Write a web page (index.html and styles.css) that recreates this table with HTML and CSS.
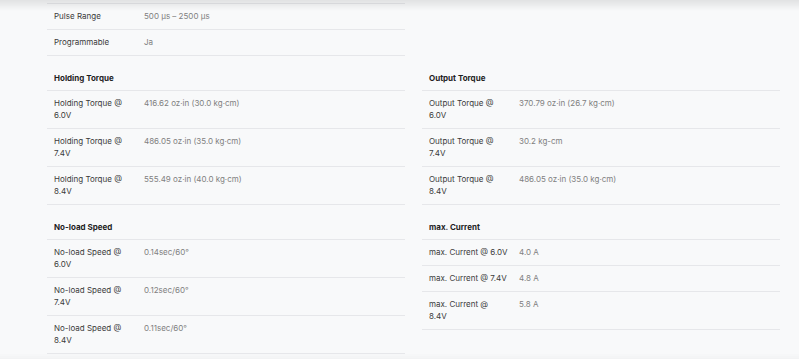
FILE: index.html
```html
<!DOCTYPE html>
<html lang="de">
<head>
    <meta charset="UTF-8">
    <title>Servo Spezifikationen</title>
    <link rel="stylesheet" href="styles.css">
</head>
<body>
    <div class="specs">
        <div class="spec-group first">
            <div class="spec-row"><span class="spec-label">Pulse Range</span><span class="spec-value">500 µs – 2500 µs</span></div>
            <div class="spec-row"><span class="spec-label">Programmable</span><span class="spec-value">Ja</span></div>
        </div>
        <div class="spec-group"></div>

        <div class="spec-group">
            <div class="spec-title">Holding Torque</div>
            <div class="spec-row"><span class="spec-label">Holding Torque @ 6.0V</span><span class="spec-value">416.62 oz·in (30.0 kg·cm)</span></div>
            <div class="spec-row"><span class="spec-label">Holding Torque @ 7.4V</span><span class="spec-value">486.05 oz·in (35.0 kg·cm)</span></div>
            <div class="spec-row"><span class="spec-label">Holding Torque @ 8.4V</span><span class="spec-value">555.49 oz·in (40.0 kg·cm)</span></div>
        </div>
        <div class="spec-group">
            <div class="spec-title">Output Torque</div>
            <div class="spec-row"><span class="spec-label">Output Torque @ 6.0V</span><span class="spec-value">370.79 oz·in (26.7 kg·cm)</span></div>
            <div class="spec-row"><span class="spec-label">Output Torque @ 7.4V</span><span class="spec-value">30.2 kg-cm</span></div>
            <div class="spec-row"><span class="spec-label">Output Torque @ 8.4V</span><span class="spec-value">486.05 oz·in (35.0 kg·cm)</span></div>
        </div>

        <div class="spec-group">
            <div class="spec-title">No-load Speed</div>
            <div class="spec-row"><span class="spec-label">No-load Speed @ 6.0V</span><span class="spec-value">0.14sec/60°</span></div>
            <div class="spec-row"><span class="spec-label">No-load Speed @ 7.4V</span><span class="spec-value">0.12sec/60°</span></div>
            <div class="spec-row"><span class="spec-label">No-load Speed @ 8.4V</span><span class="spec-value">0.11sec/60°</span></div>
        </div>
        <div class="spec-group">
            <div class="spec-title">max. Current</div>
            <div class="spec-row"><span class="spec-label">max. Current @ 6.0V</span><span class="spec-value">4.0 A</span></div>
            <div class="spec-row"><span class="spec-label">max. Current @ 7.4V</span><span class="spec-value">4.8 A</span></div>
            <div class="spec-row"><span class="spec-label">max. Current @<br>8.4V</span><span class="spec-value">5.8 A</span></div>
        </div>
    </div>
</body>
</html>
```

FILE: styles.css
```css
body {
    margin: 0;
    padding: 3px 19px 0 47px;
    background-color: #f8f9fa;
    font-family: Inter, "Noto Sans", sans-serif;
    font-size: 8px;
    line-height: 12px;
    color: #3b3b3b;
    overflow: hidden;
}
body::before {
    content: "";
    position: fixed;
    top: 0;
    left: 0;
    right: 0;
    height: 11px;
    background: linear-gradient(to bottom, rgba(0,0,0,0.09), rgba(0,0,0,0));
    pointer-events: none;
}
body::after {
    content: "";
    position: fixed;
    bottom: 0;
    left: 0;
    right: 0;
    height: 6px;
    background: linear-gradient(to top, rgba(0,0,0,0.025), rgba(0,0,0,0));
    pointer-events: none;
}
.specs {
    display: grid;
    grid-template-columns: 358px 358px;
    column-gap: 17px;
    align-items: start;
}
.spec-group.first {
    border-top: 1px solid #e6e7ea;
}
.spec-title {
    padding: 16px 7px 6px;
    font-weight: 700;
    color: #1e1e1e;
    border-bottom: 1px solid #e6e7ea;
}
.spec-row {
    display: grid;
    grid-template-columns: 83px 1fr;
    column-gap: 7px;
    padding: 6px 7px 7px;
    border-bottom: 1px solid #e6e7ea;
}
.spec-label {
    color: #3b3b3b;
}
.spec-value {
    color: #808080;
}
```
